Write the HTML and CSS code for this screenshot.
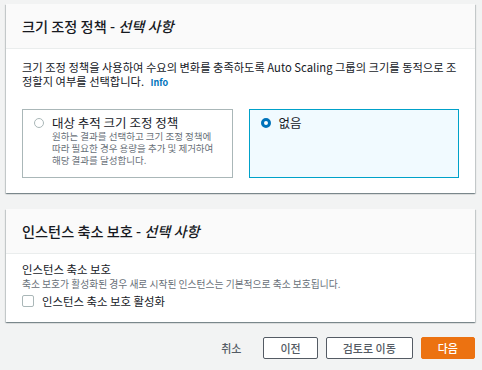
FILE: index.html
```html
<!DOCTYPE html>
<html>
<head>
    <title>크기 조정 정책</title>
    <meta charset="utf-8">
    <link rel="stylesheet" href="styles.css">
</head>
<body>
    <div class="card">
        <div class="card-header">
            <h2>크기 조정 정책 - <i>선택 사항</i></h2>
        </div>
        <div class="card-body">
            <p class="intro">크기 조정 정책을 사용하여 수요의 변화를 충족하도록 Auto Scaling 그룹의 크기를 동적으로 조정할지 여부를 선택합니다. <a href="#" class="info">Info</a></p>
            <div class="tiles">
                <label class="tile">
                    <span class="radio"></span>
                    <span class="tile-text">
                        <span class="tile-title">대상 추적 크기 조정 정책</span>
                        <span class="tile-desc">원하는 결과를 선택하고 크기 조정 정책에 따라 필요한 경우 용량을 추가 및 제거하여 해당 결과를 달성합니다.</span>
                    </span>
                </label>
                <label class="tile selected">
                    <span class="radio checked"></span>
                    <span class="tile-text">
                        <span class="tile-title">없음</span>
                    </span>
                </label>
            </div>
        </div>
    </div>

    <div class="card last">
        <div class="card-header">
            <h2>인스턴스 축소 보호 - <i>선택 사항</i></h2>
        </div>
        <div class="card-body protect">
            <div class="field-label">인스턴스 축소 보호</div>
            <div class="field-desc">축소 보호가 활성화된 경우 새로 시작된 인스턴스는 기본적으로 축소 보호됩니다.</div>
            <label class="check">
                <span class="box"></span>
                <span>인스턴스 축소 보호 활성화</span>
            </label>
        </div>
    </div>

    <div class="actions">
        <a href="#" class="link-btn">취소</a>
        <button class="btn">이전</button>
        <button class="btn">검토로 이동</button>
        <button class="btn primary">다음</button>
    </div>
</body>
</html>
```

FILE: styles.css
```css
body {
    margin: 0;
    padding: 4px 7px 0 6px;
    background: #f2f3f3;
    font-family: "Noto Sans CJK KR", "Noto Sans", sans-serif;
    color: #16191f;
}
.card {
    background: #fff;
    box-shadow: 0 1px 1px 0 rgba(0, 28, 36, 0.3), 1px 1px 1px 0 rgba(0, 28, 36, 0.15), -1px 1px 1px 0 rgba(0, 28, 36, 0.15);
    margin-bottom: 16px;
}
.card.last {
    margin-bottom: 15px;
}
.card-header {
    background: #fafafa;
    border-bottom: 1px solid #eaeded;
    height: 45px;
    box-sizing: border-box;
    padding: 0 16px 1px;
    display: flex;
    align-items: center;
}
.card-header h2 {
    margin: 0;
    font-size: 14.2px;
    font-weight: 500;
}
.card-body {
    padding: 11px 16px 15px;
}
.intro {
    margin: 0 0 21px;
    font-size: 11.25px;
    line-height: 14px;
}
.info {
    color: #0073bb;
    font-weight: bold;
    font-size: 9px;
    line-height: 1;
    text-decoration: none;
    margin-left: 4px;
}
.tiles {
    display: grid;
    grid-template-columns: 1fr 1fr;
    gap: 16px;
}
.tile {
    border: 1px solid #aab7b8;
    height: 69px;
    box-sizing: border-box;
    padding: 5px 10px;
    display: flex;
    gap: 8px;
}
.tile.selected {
    border-color: #00a1c9;
    background: #f1faff;
}
.radio {
    flex: none;
    width: 10px;
    height: 10px;
    border: 1px solid #aab7b8;
    border-radius: 50%;
    margin-top: 3px;
    margin-left: 1px;
    box-sizing: border-box;
    background: #fff;
}
.radio.checked {
    border: 3px solid #0073bb;
}
.tile-text {
    display: flex;
    flex-direction: column;
}
.tile-title {
    font-size: 12.5px;
    line-height: 15px;
}
.tile-desc {
    font-size: 9.5px;
    line-height: 12px;
    color: #687078;
}
.protect {
    padding-top: 8px;
    padding-bottom: 14px;
}
.field-label {
    font-size: 11.4px;
    line-height: 14px;
}
.field-desc {
    font-size: 9.75px;
    line-height: 14px;
    margin-top: 1px;
    color: #687078;
}
.check {
    display: flex;
    align-items: center;
    gap: 8px;
    font-size: 11.4px;
    line-height: 14px;
    margin-top: 3px;
}
.box {
    width: 10px;
    height: 10px;
    border: 1px solid #aab7b8;
    border-radius: 2px;
}
.actions {
    display: flex;
    justify-content: flex-end;
    align-items: center;
    gap: 8px;
}
.link-btn {
    color: #545b64;
    text-decoration: none;
    font-size: 11px;
    font-weight: 500;
    margin-right: 14px;
}
.btn {
    font-family: inherit;
    font-size: 11px;
    font-weight: 500;
    color: #545b64;
    background: #fff;
    border: 1px solid #545b64;
    border-radius: 2px;
    height: 22px;
    min-width: 54px;
    padding: 0 16px;
}
.btn.primary {
    background: #ec7211;
    border-color: #ec7211;
    color: #fff;
}
```
